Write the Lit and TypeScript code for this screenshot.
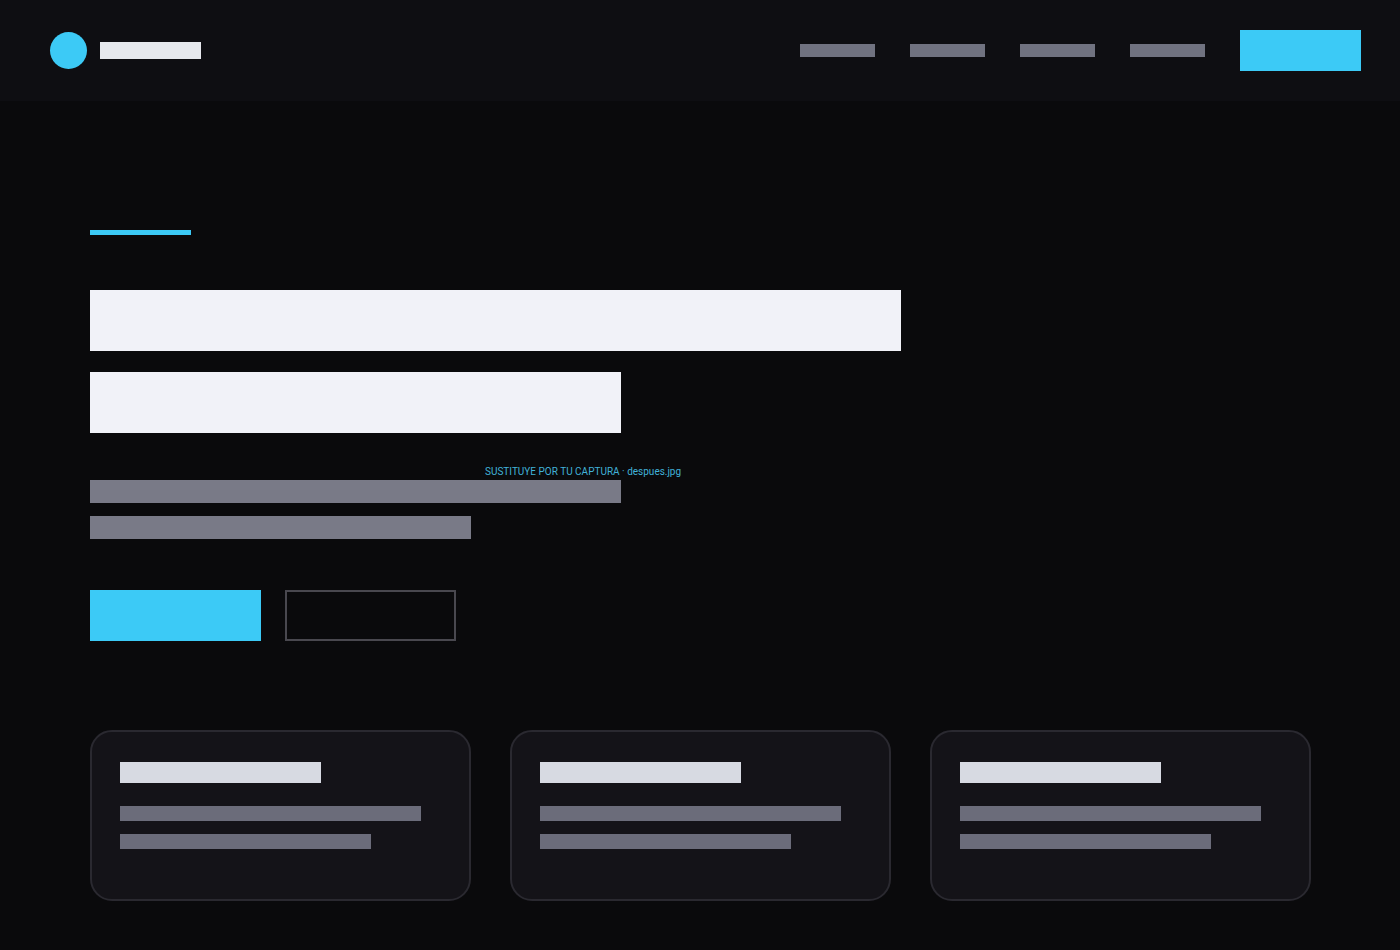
import { LitElement, html, css } from "lit";
import { customElement } from "lit/decorators.js";

@customElement("feature-card")
class FeatureCard extends LitElement {
  static styles = css`
    :host {
      display: block;
      box-sizing: border-box;
      min-height: 171px;
      padding: 30px 28px;
      border: 2px solid #2a2930;
      border-radius: 22px;
      background: #141318;
    }
    .bar {
      max-width: 100%;
      height: 15px;
      background: #6b6c7a;
    }
    .heading {
      width: 201px;
      height: 21px;
      margin-bottom: 23px;
      background: #d7dae2;
    }
    .long {
      width: 301px;
      margin-bottom: 13px;
    }
    .short {
      width: 251px;
    }
  `;

  render() {
    return html`
      <div class="bar heading"></div>
      <div class="bar long"></div>
      <div class="bar short"></div>
    `;
  }
}

@customElement("app-root")
class AppRoot extends LitElement {
  static styles = css`
    :host {
      display: block;
      box-sizing: border-box;
      min-height: 100vh;
      background: #0a0a0c;
      font-family: Roboto, "Liberation Sans", sans-serif;
    }
    header {
      display: flex;
      align-items: center;
      justify-content: space-between;
      flex-wrap: wrap;
      gap: 24px;
      padding: 30px 39px 30px 50px;
      background: #0e0e12;
    }
    .brand {
      display: flex;
      align-items: center;
      gap: 13px;
    }
    .mark {
      width: 37px;
      height: 37px;
      border-radius: 50%;
      background: #3ccaf6;
    }
    .name {
      width: 101px;
      height: 17px;
      background: #e6e8ed;
    }
    nav {
      display: flex;
      align-items: center;
      flex-wrap: wrap;
      gap: 35px;
    }
    .link {
      display: block;
      width: 75px;
      height: 13px;
      background: #707280;
    }
    button {
      box-sizing: border-box;
      width: 171px;
      height: 51px;
      padding: 0;
      border: 0;
      border-radius: 0;
      background: #3ccaf6;
      cursor: pointer;
    }
    .cta {
      width: 121px;
      height: 41px;
    }
    .outline {
      border: 2px solid #49484f;
      background: transparent;
    }
    main {
      padding: 129px 89px 49px 90px;
    }
    .accent {
      width: 101px;
      height: 5px;
      margin-bottom: 55px;
      background: #3ccaf6;
    }
    h1 {
      display: grid;
      gap: 21px;
      margin: 0;
    }
    .title {
      width: 811px;
      max-width: 100%;
      height: 61px;
      background: #f1f2f8;
    }
    .second {
      width: 531px;
    }
    .note {
      margin: 32px 0 1px 395px;
      color: #41b2d9;
      font-size: 10px;
      line-height: 14px;
      white-space: nowrap;
    }
    .lead {
      display: grid;
      gap: 13px;
    }
    .line {
      width: 531px;
      max-width: 100%;
      height: 23px;
      background: #797a87;
    }
    .last {
      width: 381px;
    }
    .actions {
      display: flex;
      flex-wrap: wrap;
      gap: 24px;
      margin: 51px 0 89px;
    }
    .cards {
      display: grid;
      grid-template-columns: repeat(auto-fit, minmax(300px, 1fr));
      gap: 39px;
    }
  `;

  render() {
    return html`
      <header>
        <div class="brand">
          <div class="mark"></div>
          <div class="name"></div>
        </div>
        <nav>
          ${[1, 2, 3, 4].map(
            (n) => html`<a class="link" href="#" aria-label="Enlace ${n}"></a>`
          )}
          <button class="cta" type="button" aria-label="Empezar"></button>
        </nav>
      </header>
      <main>
        <div class="accent"></div>
        <h1>
          <span class="title"></span>
          <span class="title second"></span>
        </h1>
        <p class="note">SUSTITUYE POR TU CAPTURA · despues.jpg</p>
        <div class="lead">
          <div class="line"></div>
          <div class="line last"></div>
        </div>
        <div class="actions">
          <button type="button" aria-label="Comenzar"></button>
          <button class="outline" type="button" aria-label="Saber más"></button>
        </div>
        <section class="cards">
          <feature-card></feature-card>
          <feature-card></feature-card>
          <feature-card></feature-card>
        </section>
      </main>
    `;
  }
}
